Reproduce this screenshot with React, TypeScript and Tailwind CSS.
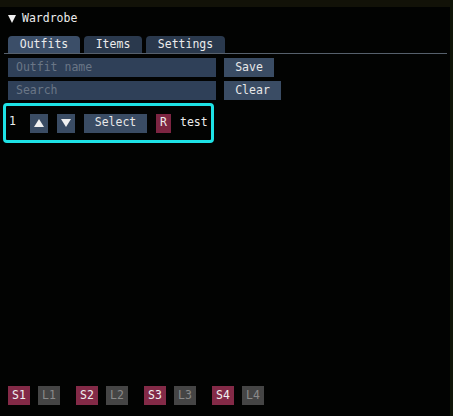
import React from "react";

const font = { fontFamily: '"DejaVu Sans Mono", "Liberation Mono", monospace' };

function Btn({ children, className = "" }: { children: React.ReactNode; className?: string }) {
  return (
    <div className={`flex items-center justify-center h-[19px] bg-[#3a4c64] text-[#e8e8e8] ${className}`}>
      {children}
    </div>
  );
}

export default function App() {
  return (
    <div
      className="relative w-[453px] h-[416px] bg-[#020302] text-[11.5px] text-[#ececec] overflow-hidden flex flex-col"
      style={font}
    >
      <div className="h-[7px] bg-[#121208] shrink-0" />
      <div className="absolute right-0 top-0 bottom-0 w-[3px] bg-[#101608]" />
      <div className="flex items-center h-[20px] mt-[2px] pl-[8px] gap-[6px] leading-none">
        <svg width="8" height="8" viewBox="0 0 8 8">
          <polygon points="0,0 8,0 4,8" fill="#f0f0f0" />
        </svg>
        <span>Wardrobe</span>
      </div>
      <div className="flex pl-[8px] gap-[4px] mt-[7px] h-[17px] leading-none">
        <div className="w-[72px] flex items-center justify-center bg-[#3b4e68] rounded-t-[4px]">Outfits</div>
        <div className="w-[58px] flex items-center justify-center bg-[#2a394d] rounded-t-[4px]">Items</div>
        <div className="w-[79px] flex items-center justify-center bg-[#2a394d] rounded-t-[4px]">Settings</div>
      </div>
      <div className="ml-[4px] w-[443px] h-[1px] bg-[#56606c]" />
      <div className="flex flex-col gap-[4px] mt-[4px] pl-[8px] leading-none">
        <div className="flex gap-[8px]">
          <div className="w-[208px] h-[19px] bg-[#2f4058] flex items-center pl-[8px] text-[#6a7686]">Outfit name</div>
          <Btn className="w-[50px]">Save</Btn>
        </div>
        <div className="flex gap-[8px]">
          <div className="w-[208px] h-[19px] bg-[#2f4058] flex items-center pl-[8px] text-[#6a7686]">Search</div>
          <Btn className="w-[57px]">Clear</Btn>
        </div>
      </div>
      <div className="ml-[3px] mt-[3px] w-[211px] h-[40px] border-[3px] border-[#1ee3e6] rounded-[4px] flex items-center pl-[3px] leading-none">
        <span className="w-[21px] -mt-[2px]">1</span>
        <Btn className="w-[18px]">
          <svg width="10" height="8" viewBox="0 0 10 8"><polygon points="5,0 10,8 0,8" fill="#f0f0f0" /></svg>
        </Btn>
        <Btn className="w-[18px] ml-[9px]">
          <svg width="10" height="8" viewBox="0 0 10 8"><polygon points="0,0 10,0 5,8" fill="#f0f0f0" /></svg>
        </Btn>
        <Btn className="w-[63px] ml-[9px]">Select</Btn>
        <div className="w-[15px] h-[19px] ml-[9px] bg-[#7c2542] flex items-center justify-center">R</div>
        <span className="ml-[9px]">test</span>
      </div>
      <div className="flex-1" />
      <div className="flex pl-[8px] mb-[11px] leading-none">
        {[1, 2, 3, 4].map((n, i) => (
          <div key={n} className={`flex gap-[8px] ${i > 0 ? "ml-[16px]" : ""}`}>
            <div className="w-[22px] h-[19px] bg-[#832a47] flex items-center justify-center text-[#f0f0f0]">S{n}</div>
            <div className="w-[22px] h-[19px] bg-[#454545] flex items-center justify-center text-[#8a8a8a]">L{n}</div>
          </div>
        ))}
      </div>
    </div>
  );
}
